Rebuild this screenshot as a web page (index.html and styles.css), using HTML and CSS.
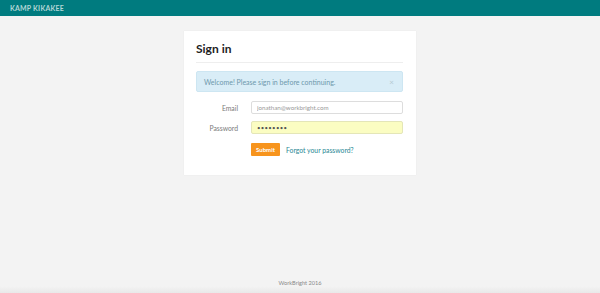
FILE: index.html
```html
<!DOCTYPE html>
<html lang="en">
<head>
    <meta charset="UTF-8">
    <meta name="viewport" content="width=device-width, initial-scale=1.0">
    <title>Sign in</title>
    <link rel="stylesheet" href="styles.css">
</head>
<body>
    <div class="topbar">
        <span class="brand">KAMP KIKAKEE</span>
    </div>

    <div class="page">
        <div class="card">
            <h1>Sign in</h1>

            <div class="alert">
                <span>Welcome! Please sign in before continuing.</span>
                <span class="close">&times;</span>
            </div>

            <div class="form-row">
                <label for="email">Email</label>
                <input type="email" id="email" placeholder="jonathan@workbright.com">
            </div>

            <div class="form-row">
                <label for="password">Password</label>
                <input type="password" id="password" class="filled" value="password">
            </div>

            <div class="form-row actions">
                <span class="spacer"></span>
                <button>Submit</button>
                <a href="#">Forgot your password?</a>
            </div>
        </div>
    </div>

    <div class="footer">WorkBright 2016</div>
</body>
</html>
```

FILE: styles.css
```css
body {
    margin: 0;
    height: 293px;
    display: flex;
    flex-direction: column;
    background: #f3f3f3;
    font-family: Lato, "Open Sans", sans-serif;
    color: #333;
}
.topbar {
    height: 16px;
    background-color: #007b7f;
    display: flex;
    align-items: center;
    padding-left: 10px;
}
.brand {
    color: #b3d6d6;
    font-size: 7px;
    font-weight: bold;
    letter-spacing: 0.2px;
}
.page {
    flex: 1;
    padding-top: 15px;
}
.card {
    width: 232px;
    margin: 0 auto;
    background: #fff;
    box-sizing: border-box;
    padding: 10px 13px 19px 12px;
    box-shadow: 0 0 1px rgba(0, 0, 0, 0.08);
}
h1 {
    margin: 0;
    font-size: 12px;
    font-weight: bold;
    color: #222;
    padding-bottom: 6px;
    border-bottom: 1px solid #eee;
}
.alert {
    margin-top: 8px;
    height: 21px;
    box-sizing: border-box;
    background: #d9edf7;
    border: 1px solid #cde6f2;
    border-radius: 2px;
    color: #6d98ab;
    font-size: 7px;
    display: flex;
    align-items: center;
    justify-content: space-between;
    padding: 0 8px 0 7px;
    margin-bottom: 9px;
}
.close {
    color: #b5c9d2;
    font-size: 8px;
}
.form-row {
    display: flex;
    align-items: center;
    margin-bottom: 7px;
}
.form-row label,
.spacer {
    width: 42px;
    flex: none;
    text-align: right;
    font-size: 6.8px;
    color: #7a7a7a;
    margin-right: 13px;
}
input {
    flex: 1;
    height: 13px;
    box-sizing: border-box;
    border: 1px solid #ddd;
    border-radius: 2px;
    padding: 0 5px;
    font-family: inherit;
    font-size: 6.2px;
    color: #555;
}
input::placeholder {
    color: #999;
}
input.filled {
    background: #fbfdc2;
    border-color: #e4e6b8;
    font-size: 6px;
    letter-spacing: 0.3px;
}
.actions {
    margin-top: 9px;
    margin-bottom: 0;
}
button {
    background-color: #f7941d;
    color: #fff;
    border: none;
    border-radius: 1px;
    height: 13px;
    width: 29px;
    padding: 0;
    font-family: inherit;
    font-size: 6px;
    font-weight: bold;
    margin-right: 6px;
}
.actions a {
    color: #2a8894;
    font-size: 6.8px;
    text-decoration: none;
}
.footer {
    height: 22px;
    box-sizing: border-box;
    text-align: center;
    font-size: 5.6px;
    color: #888;
    padding-top: 8px;
    background: linear-gradient(#f3f3f3, #f3f3f3 70%, #e9e9e9);
}
```
